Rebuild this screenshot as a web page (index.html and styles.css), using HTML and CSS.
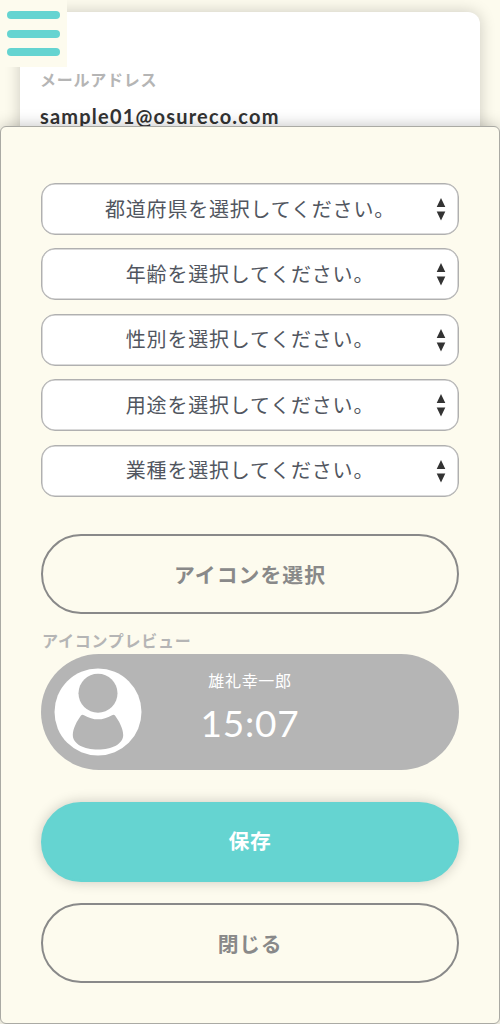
FILE: index.html
```html
<!DOCTYPE html>
<html lang="ja">
<head>
<meta charset="utf-8">
<meta name="viewport" content="width=device-width">
<title>プロフィール編集</title>
<link rel="stylesheet" href="styles.css">
</head>
<body>
<main class="page">
  <section class="card">
    <div class="label">メールアドレス</div>
    <div class="email">sample01@osureco.com</div>
  </section>
</main>
<button class="menu" aria-label="メニュー"><span class="bar"></span><span class="bar"></span><span class="bar"></span></button>
<section class="modal">
  <div class="selects">
    <div class="select"><span>都道府県を選択してください。</span><svg class="arrows" viewBox="0 0 10 24"><path d="M5 1L9.300 10H.7ZM.7 14.500H9.300L5 23.500Z"/></svg></div>
    <div class="select"><span>年齢を選択してください。</span><svg class="arrows" viewBox="0 0 10 24"><path d="M5 1L9.300 10H.7ZM.7 14.500H9.300L5 23.500Z"/></svg></div>
    <div class="select"><span>性別を選択してください。</span><svg class="arrows" viewBox="0 0 10 24"><path d="M5 1L9.300 10H.7ZM.7 14.500H9.300L5 23.500Z"/></svg></div>
    <div class="select"><span>用途を選択してください。</span><svg class="arrows" viewBox="0 0 10 24"><path d="M5 1L9.300 10H.7ZM.7 14.500H9.300L5 23.500Z"/></svg></div>
    <div class="select"><span>業種を選択してください。</span><svg class="arrows" viewBox="0 0 10 24"><path d="M5 1L9.300 10H.7ZM.7 14.500H9.300L5 23.500Z"/></svg></div>
  </div>
  <button class="button choose">アイコンを選択</button>
  <div class="label preview-label">アイコンプレビュー</div>
  <div class="preview">
    <svg class="avatar" viewBox="0 0 88 88">
      <circle cx="44" cy="44" r="43.5" fill="#fff"/>
      <circle cx="44" cy="25.3" r="19.5" fill="#b5b5b5"/>
      <path d="M27 47.500Q28.200 46.200 30 47.200Q44 55.500 58 47.200Q59.800 46.200 61 47.500C65 53 69.200 60.500 69.200 67C69.200 76 58 81.500 44 81.500C30 81.500 18.800 76 18.800 67C18.800 60.500 23 53 27 47.500Z" fill="#b5b5b5"/>
    </svg>
    <div class="info">
      <div class="name">雄礼幸一郎</div>
      <div class="time">15:07</div>
    </div>
  </div>
  <button class="button save">保存</button>
  <button class="button close">閉じる</button>
</section>
</body>
</html>
```
FILE: styles.css
```css
* { box-sizing: border-box; }
body {
  margin: 0;
  height: 1024px;
  overflow: hidden;
  background: #fdfbee;
  color: #333;
  font-family: Lato, "Noto Sans CJK JP", sans-serif;
}
.page { padding: 12px 20px 0; }
.card {
  height: 300px;
  padding: 56px 20px 0;
  border-radius: 12px;
  background: #fff;
  box-shadow: 0 0 16px rgba(0, 0, 0, .2);
}
.label {
  font-size: 16px;
  line-height: 24px;
  font-weight: 700;
  letter-spacing: .75px;
  color: #b5b5b5;
}
.email {
  margin-top: 11px;
  font-size: 20px;
  line-height: 26px;
  font-weight: 700;
  letter-spacing: 1.2px;
}
.menu {
  position: absolute;
  top: 0;
  left: 0;
  width: 67px;
  height: 67px;
  padding: 11px 7px 0;
  border: 0;
  background: #fdfbee;
  display: flex;
  flex-direction: column;
  gap: 10.700px;
}
.bar {
  flex: none;
  width: 53px;
  height: 8px;
  border-radius: 4px;
  background: #65d4d1;
}
.modal {
  position: absolute;
  top: 126px;
  left: 0;
  width: 500px;
  height: 898px;
  padding: 56px 40px 0;
  border: 1px solid #aaaaa4;
  border-radius: 6px;
  background: #fdfbee;
  box-shadow: 0 0 16px rgba(0, 0, 0, .25);
}
.selects {
  display: flex;
  flex-direction: column;
  gap: 13.400px;
}
.select {
  display: flex;
  align-items: center;
  justify-content: center;
  position: relative;
  height: 52px;
  padding-bottom: 2px;
  border: 1px solid #b0b0b0;
  border-radius: 14px;
  background: #fff;
  box-shadow: inset 0 0 0 .5px #b5b5b5;
  color: #515660;
  font-size: 20px;
  letter-spacing: .8px;
}
.arrows {
  position: absolute;
  right: 12px;
  top: 13px;
  width: 10px;
  height: 24px;
  fill: #333;
}
.button {
  display: flex;
  align-items: center;
  justify-content: center;
  width: 100%;
  height: 80px;
  padding: 0;
  border: 2px solid #898989;
  border-radius: 40px;
  background: transparent;
  color: #898989;
  font-family: inherit;
  font-size: 20.800px;
  font-weight: 700;
  letter-spacing: 1.1px;
}
.choose { margin-top: 37.400px; }
.preview-label { margin-top: 15px; padding-left: 1px; }
.preview {
  display: flex;
  position: relative;
  justify-content: center;
  height: 116px;
  margin-top: 1px;
  border-radius: 58px;
  background: #b5b5b5;
  color: #fff;
}
.avatar {
  position: absolute;
  left: 13px;
  top: 14px;
  width: 88px;
  height: 88px;
}
.info { padding-top: 15px; text-align: center; }
.name { font-size: 16px; line-height: 24px; letter-spacing: .7px; }
.time { font-size: 37px; line-height: 48px; margin-top: 6px; letter-spacing: .8px; }
.save {
  margin-top: 32px;
  padding-bottom: 4px;
  border-color: #65d4d1;
  background: #65d4d1;
  color: #fff;
  letter-spacing: .6px;
  box-shadow: 0 0 13px rgba(0, 0, 0, .2);
}
.close { margin-top: 21px; letter-spacing: .7px; }
```
